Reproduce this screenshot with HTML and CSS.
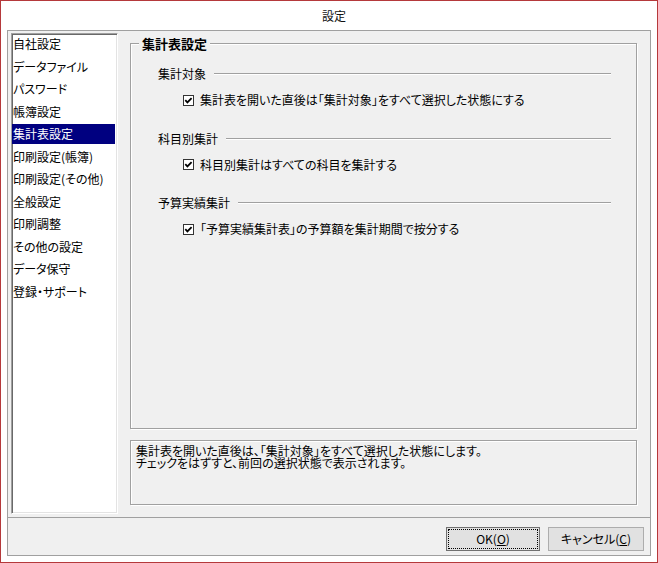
FILE: index.html
```html
<!DOCTYPE html>
<html lang="ja">
<head>
<meta charset="utf-8">
<title>設定</title>
<link rel="stylesheet" href="styles.css">
</head>
<body>
<div class="window">
  <div class="titlebar"><span class="title">設定</span></div>
  <div class="frame">
    <div class="main">
      <ul class="nav">
        <li>自社設定</li>
        <li>データファイル</li>
        <li>パスワード</li>
        <li>帳簿設定</li>
        <li class="selected">集計表設定</li>
        <li>印刷設定(帳簿)</li>
        <li>印刷設定(その他)</li>
        <li>全般設定</li>
        <li>印刷調整</li>
        <li>その他の設定</li>
        <li>データ保守</li>
        <li>登録・サポート</li>
      </ul>
      <div class="content">
        <div class="group">
          <span class="group-title">集計表設定</span>
          <section class="sec">
            <div class="sec-head"><span>集計対象</span><span class="rule"></span></div>
            <label class="check">
              <svg class="box" width="11" height="11" viewBox="0 0 11 11"><rect x="0.5" y="0.5" width="10" height="10" fill="#fff" stroke="#333"/><polyline points="2.3,5.2 4.4,7.4 8.6,3.1" fill="none" stroke="#000" stroke-width="1.8"/></svg>
              <span>集計表を開いた直後は「集計対象」をすべて選択した状態にする</span>
            </label>
          </section>
          <section class="sec">
            <div class="sec-head"><span>科目別集計</span><span class="rule"></span></div>
            <label class="check">
              <svg class="box" width="11" height="11" viewBox="0 0 11 11"><rect x="0.5" y="0.5" width="10" height="10" fill="#fff" stroke="#333"/><polyline points="2.3,5.2 4.4,7.4 8.6,3.1" fill="none" stroke="#000" stroke-width="1.8"/></svg>
              <span>科目別集計はすべての科目を集計する</span>
            </label>
          </section>
          <section class="sec">
            <div class="sec-head"><span>予算実績集計</span><span class="rule"></span></div>
            <label class="check">
              <svg class="box" width="11" height="11" viewBox="0 0 11 11"><rect x="0.5" y="0.5" width="10" height="10" fill="#fff" stroke="#333"/><polyline points="2.3,5.2 4.4,7.4 8.6,3.1" fill="none" stroke="#000" stroke-width="1.8"/></svg>
              <span>「予算実績集計表」の予算額を集計期間で按分する</span>
            </label>
          </section>
        </div>
        <div class="desc">
          <p>集計表を開いた直後は、「集計対象」をすべて選択した状態にします。</p>
          <p>チェックをはずすと、前回の選択状態で表示されます。</p>
        </div>
      </div>
    </div>
    <div class="buttons">
      <button class="btn default">OK(<u>O</u>)</button>
      <button class="btn">キャンセル(<u>C</u>)</button>
    </div>
  </div>
</div>
</body>
</html>
```
FILE: styles.css
```css
* { box-sizing: border-box; }
body {
  margin: 0;
  background: #fff;
  font-family: "Noto Sans CJK JP", "Noto Sans", sans-serif;
  font-size: 12px;
  font-feature-settings: "palt";
  color: #000;
}
.window {
  width: 658px;
  height: 563px;
  border: 1px solid #b5393b;
  background: #fff;
}
.titlebar {
  height: 29px;
  display: flex;
  align-items: center;
  justify-content: center;
  padding-left: 10px;
}
.title { font-size: 12px; line-height: 14px; color: #111; }
.frame {
  margin-left: 6px;
  width: 644px;
  height: 526px;
  background: #f0f0f0;
  border: 1px solid #a0a0a0;
  display: flex;
  flex-direction: column;
}
.main {
  height: 487px;
  border-bottom: 1px solid #a0a0a0;
  display: flex;
  padding: 2px 0 0 3px;
}
.nav {
  list-style: none;
  margin: 0;
  padding: 0;
  width: 107px;
  height: 481px;
  background: #fff;
  border-top: 1px solid #a0a0a0;
  border-left: 1px solid #a0a0a0;
  border-right: 1px solid #fff;
  border-bottom: 1px solid #fff;
  box-shadow: inset 1px 1px 0 #696969, inset -1px -1px 0 #e3e3e3;
}
.nav li {
  height: 20px;
  line-height: 20px;
  margin: 0 2px 2.5px 0;
  padding-left: 1px;
  white-space: nowrap;
}
.nav li.selected { background: #000080; color: #fff; }
.content {
  margin-left: 12px;
  width: 507px;
  display: flex;
  flex-direction: column;
}
.group {
  position: relative;
  margin-top: 10px;
  height: 386px;
  border: 1px solid #a0a0a0;
  box-shadow: 1px 1px 0 #fff, inset 1px 1px 0 #fff;
  padding: 23px 25px 0 27px;
}
.group-title {
  position: absolute;
  top: -8px;
  left: 8px;
  padding: 0 3px;
  background: #f0f0f0;
  font-size: 13px;
  font-weight: bold;
  line-height: 15px;
}
.sec { margin-bottom: 24.5px; }
.sec-head {
  display: flex;
  align-items: center;
  height: 14px;
  line-height: 14px;
}
.rule {
  flex: 1;
  height: 2px;
  margin-left: 8px;
  border-top: 1px solid #a0a0a0;
  border-bottom: 1px solid #fff;
}
.check {
  display: flex;
  align-items: center;
  height: 14px;
  line-height: 14px;
  margin: 12px 0 0 25px;
  gap: 6px;
}
.box { display: block; flex: none; }
.desc {
  margin-top: 11px;
  height: 65px;
  border: 1px solid #a0a0a0;
  box-shadow: 1px 1px 0 #fff, inset 1px 1px 0 #fff;
  padding: 4px 5px;
}
.desc p { margin: 0; line-height: 12px; }
.buttons {
  flex: 1;
  display: flex;
  justify-content: flex-end;
  align-items: flex-start;
  gap: 8px;
  padding: 9px 6px 0 0;
}
.btn {
  height: 24px;
  width: 96px;
  font: inherit;
  font-size: 12px;
  color: #000;
  background: #e1e1e1;
  border: 1px solid #adadad;
  padding: 0;
  line-height: 20px;
}
.btn.default {
  width: 94px;
  border-color: #707070;
  outline: 1px dotted #000;
  outline-offset: -3px;
}
.btn u { text-decoration: underline; }
```
